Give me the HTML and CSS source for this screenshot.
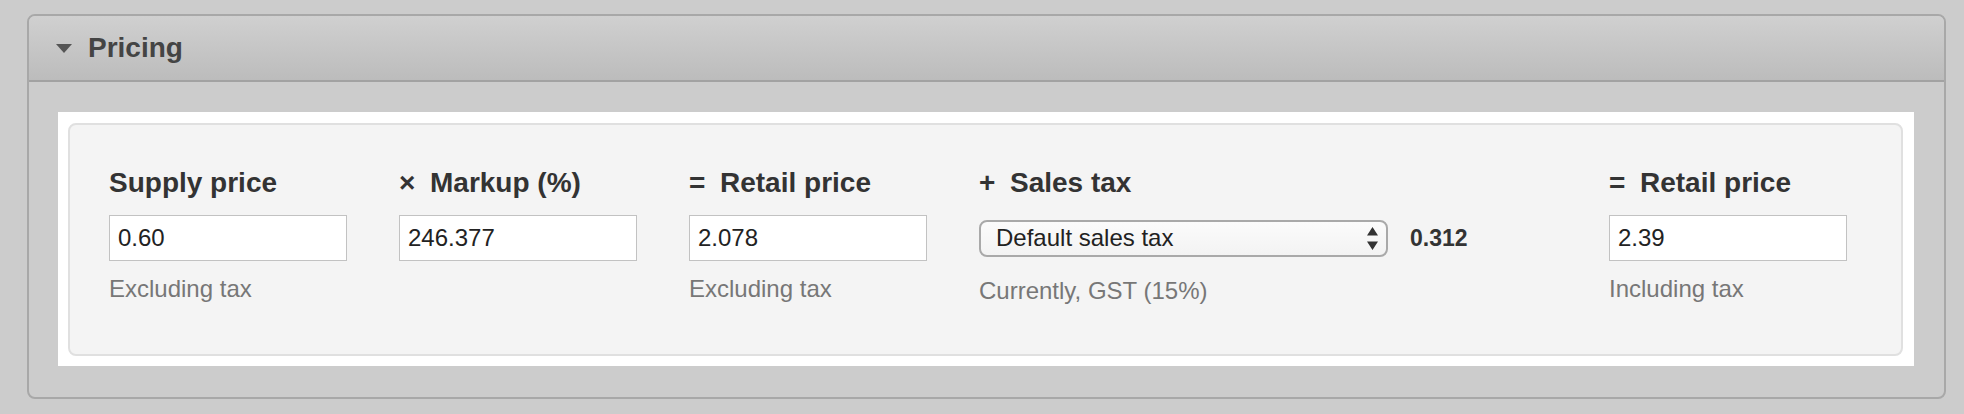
FILE: index.html
```html
<!DOCTYPE html>
<html lang="en">
<head>
<meta charset="utf-8">
<title>Pricing</title>
<link rel="stylesheet" href="styles.css">
</head>
<body>
<section class="panel">
  <header class="panel-head">
    <svg class="caret" width="16" height="9" viewBox="0 0 16 9"><path d="M0 0 H16 L8 9 Z" fill="#555"/></svg>
    <h2 class="panel-title">Pricing</h2>
  </header>
  <div class="panel-body">
    <div class="sheet">
      <div class="calc">
        <div class="col">
          <div class="label">Supply price</div>
          <div class="row"><div class="input">0.60</div></div>
          <div class="help">Excluding tax</div>
        </div>
        <div class="col">
          <div class="label"><span class="op">×</span>Markup (%)</div>
          <div class="row"><div class="input">246.377</div></div>
        </div>
        <div class="col">
          <div class="label"><span class="op">=</span>Retail price</div>
          <div class="row"><div class="input">2.078</div></div>
          <div class="help">Excluding tax</div>
        </div>
        <div class="col">
          <div class="label"><span class="op">+</span>Sales tax</div>
          <div class="row">
            <div class="select">
              <span>Default sales tax</span>
              <svg class="updown" width="11" height="23" viewBox="0 0 11 23"><path d="M5.5 0 L11 8.5 H0 Z M0 14.5 H11 L5.5 23 Z" fill="#333"/></svg>
            </div>
            <strong class="amount">0.312</strong>
          </div>
          <div class="help help-low">Currently, GST (15%)</div>
        </div>
        <div class="col">
          <div class="label"><span class="op">=</span>Retail price</div>
          <div class="row"><div class="input">2.39</div></div>
          <div class="help">Including tax</div>
        </div>
      </div>
    </div>
  </div>
</section>
</body>
</html>
```

FILE: styles.css
```css
html, body {
  margin: 0;
  background: #cccccc;
}
body {
  padding: 14px 18px 16px 27px;
  font-family: "Liberation Sans", Arial, Helvetica, sans-serif;
  color: #333;
}
.panel {
  border: 2px solid #a8a8a8;
  border-radius: 8px;
  overflow: hidden;
  background: #cccccc;
}
.panel-head {
  height: 64px;
  border-bottom: 2px solid #a2a2a2;
  background: linear-gradient(#d0d0d0, #bcbcbc);
  display: flex;
  align-items: center;
  padding-left: 27px;
  gap: 16px;
}
.caret {
  display: block;
  margin-top: 1px;
}
.panel-title {
  margin: 0;
  font-size: 28px;
  font-weight: bold;
  color: #444;
  line-height: 32px;
}
.panel-body {
  padding: 30px 30px 31px 29px;
}
.sheet {
  background: #fff;
  padding: 11px 11px 10px 10px;
}
.calc {
  background: #f4f4f4;
  border: 2px solid #e0e0e0;
  border-radius: 8px;
  padding: 42px 20px 49px 39px;
  display: grid;
  grid-template-columns: 238px 238px 238px 578px 238px;
  column-gap: 52px;
  align-items: start;
}
.col {
  display: flex;
  flex-direction: column;
}
.label {
  font-size: 28px;
  font-weight: bold;
  line-height: 32px;
  color: #333;
  white-space: nowrap;
}
.op {
  display: inline-block;
  width: 31px;
}
.row {
  margin-top: 16px;
  height: 46px;
  display: flex;
  align-items: center;
  gap: 22px;
}
.input {
  box-sizing: border-box;
  width: 238px;
  height: 46px;
  background: #fff;
  border: 1px solid #c2c2c2;
  padding: 0 8px;
  font-size: 24px;
  line-height: 44px;
  color: #222;
}
.select {
  box-sizing: border-box;
  width: 409px;
  height: 37px;
  border: 2px solid #a9a9a9;
  border-radius: 8px;
  background: linear-gradient(#fbfbfb, #f3f3f3);
  display: flex;
  align-items: center;
  justify-content: space-between;
  padding: 0 8px 0 15px;
  font-size: 24px;
  color: #222;
}
.updown {
  display: block;
}
.amount {
  font-size: 23px;
  font-weight: bold;
  color: #333;
}
.help {
  margin-top: 14px;
  font-size: 24px;
  line-height: 28px;
  color: #777;
}
.help-low {
  margin-top: 16px;
}
```
